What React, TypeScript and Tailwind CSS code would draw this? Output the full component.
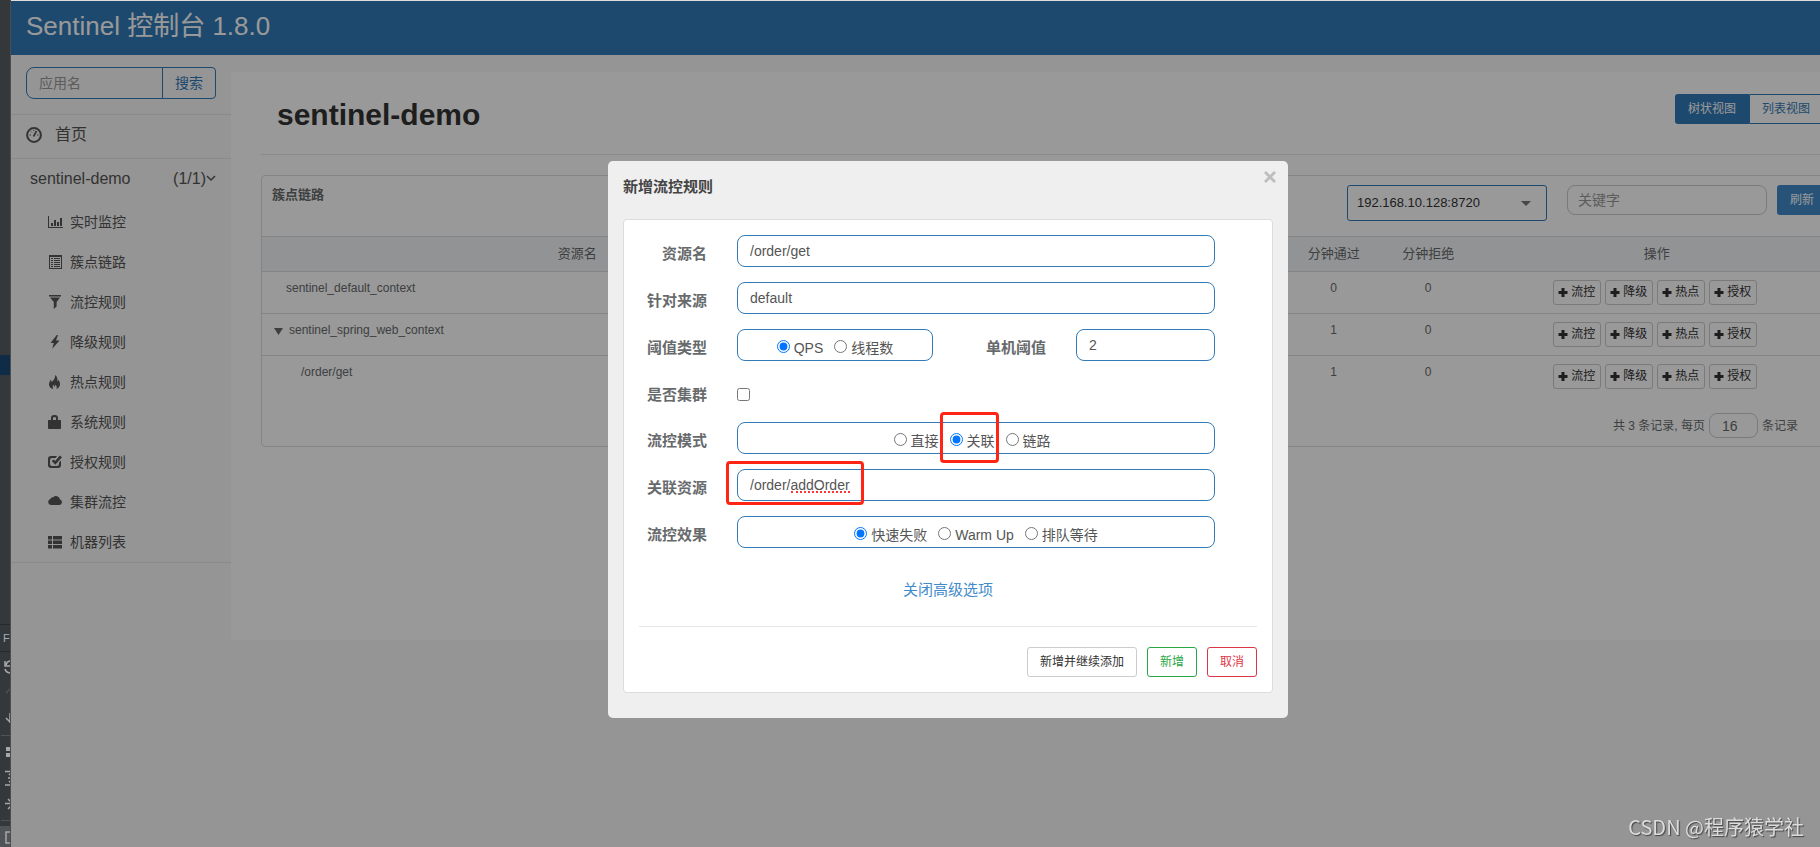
import React, { useState } from "react";

const actions = ["流控", "降级", "热点", "授权"];

const resources = [
  { name: "sentinel_default_context", indent: "pl-6", expanded: false, pass: 0, block: 0 },
  { name: "sentinel_spring_web_context", indent: "pl-3", expanded: true, pass: 1, block: 0 },
  { name: "/order/get", indent: "pl-[39px]", expanded: false, pass: 1, block: 0 },
];

const menuItems = [
  {
    label: "实时监控",
    icon: (
      <path d="M0 1h1v11h14v1H0zM3 8h2v3H3zM6 5h2v6H6zM9 7h2v4H9zM12 3h2v8h-2z" />
    ),
  },
  {
    label: "簇点链路",
    icon: (
      <path
        fillRule="evenodd"
        d="M1 0h13v14H1zM2 2v11h11V2zM3 3h2v1H3zM6 3h6v1H6zM3 5h2v1H3zM6 5h6v1H6zM3 7h2v1H3zM6 7h6v1H6zM3 9h2v1H3zM6 9h6v1H6zM3 11h2v1H3zM6 11h6v1H6z"
      />
    ),
  },
  {
    label: "流控规则",
    icon: <path d="M1 0h12v1.5H1zM2 2.5h10L8.6 7v4.5L5.8 14V7z" />,
  },
  {
    label: "降级规则",
    icon: <path d="M8.8 0 2.5 8h3.3L4.2 13.8 11.6 5.4H8L10 0z" />,
  },
  {
    label: "热点规则",
    icon: (
      <path d="M7 0c2.2 1.6 3 4 2 6.6.7-.3 1-1.1.9-2 1.6 1.6 2.6 3.6 2 5.7-.5 2-2 3.2-3.6 3.7.9-1.5.5-3-.8-4.6-.1 1.3-.5 2-1.3 2.4-.2-.8-.3-1.5-.9-2.3-.6 1.4-.8 2.8 0 4.5C2.8 13.3 1 11.7 1 9.4c0-2 1-3.3 2-4.8.1 1 .2 1.8.7 2.3C5.900 5.200 7.500 3 7 0z" />
    ),
  },
  {
    label: "系统规则",
    icon: (
      <path
        fillRule="evenodd"
        d="M3 5V3a3 3 0 0 1 3-3h1a3 3 0 0 1 3 3v2h2.500q.5 0 .5.500V13q0 1-1 1H1q-1 0-1-1V5.500Q0 5 .5 5zM5 5h3V3.200Q8 2 6.500 2T5 3.200z"
      />
    ),
  },
  {
    label: "授权规则",
    icon: (
      <path
        fillRule="evenodd"
        d="M3 1h6l-1.500 2H4Q2 3 2 5v4q0 2 2 2h5q2 0 2-2V7.500l2-2V10q0 3-3 3H3q-3 0-3-3V4q0-3 3-3zM11.800.5 14 2.300 7.300 9.800 3.800 6l1.800-1.600L7.200 6z"
      />
    ),
  },
  {
    label: "集群流控",
    icon: (
      <path d="M3 10a3 3 0 0 1-.6-5.900A2.300 2.300 0 0 1 5 2.400 4 4 0 0 1 12 4.400 2.900 2.900 0 0 1 11.500 10z" />
    ),
  },
  {
    label: "机器列表",
    icon: (
      <path d="M0 1h4v3.500H0zM5 1h9v3.500H5zM0 5.500h4V9H0zM5 5.500h9V9H5zM0 10h4v3.500H0zM5 10h9v3.500H5z" />
    ),
  },
];

const boxStyle = "h-8 rounded-lg border border-[#337ab7] bg-white text-sm text-[#555]";
const labelStyle = "mr-[30px] w-[68px] shrink-0 pt-[3px] text-right text-[15px] font-bold text-[#676a6c]";

type RadioGroupProps = {
  name: string;
  options: string[];
  value: string;
  onChange: (value: string) => void;
  marked?: string;
};

function RadioGroup({ name, options, value, onChange, marked }: RadioGroupProps) {
  return (
    <div role="radiogroup" className="flex h-full items-center justify-center gap-[11px] pt-0.5">
      {options.map((option) => (
        <label key={option} className="relative flex items-center gap-1">
          <input
            type="radio"
            name={name}
            checked={value === option}
            onChange={() => onChange(option)}
            className="size-[13px]"
          />
          <span className="pt-[3px] leading-5">{option}</span>
          {marked === option && (
            <span className="pointer-events-none absolute -top-4 -right-1 -bottom-3 -left-[10px] rounded-sm border-3 border-[#ff2414]" />
          )}
        </label>
      ))}
    </div>
  );
}

// Narrow slice of the editor tool window on the left edge
function EditorStrip() {
  return (
    <div className="flex w-[11px] shrink-0 flex-col overflow-hidden border-r border-[#4b4d4f] bg-[#35383a]">
      <div className="h-[355px] shrink-0" />
      <div className="h-5 shrink-0 bg-[#0f2c47]" />
      <div className="h-[249px] shrink-0" />
      <div className="h-7 shrink-0 border-y border-[#262829] pl-[3px] text-[11px] leading-[26px] text-[#9fb0bd]">Fi</div>
      <svg className="h-[195px] w-[11px] shrink-0" viewBox="0 0 11 195" fill="none" stroke="#a5a7a8" strokeWidth="1.500">
        <path d="M5 9v5h5M6 13a5 5 0 0 1 5-4M5 17q1 4 6 4" />
        <path d="M6 41l5-5" stroke="#4d5052" />
        <path d="M6 66l5 5M10 61v10" />
        <path d="M1 83.500h10M1 168.500h10" stroke="#505355" strokeWidth="1" />
        <path d="M6 95h4v4H6zM6 101h4v4H6z" fill="#a5a7a8" stroke="none" />
        <path d="M5 119.500h6M5 133h6M8 126h3M9 123l2-2M9 129l2 2" />
        <path d="M5 151.500h6M8 147l3 3M8 157l3-3" />
        <path d="M0 174h11v21H0z" fill="#505456" stroke="none" />
        <path d="M11 180H6v11h5" />
      </svg>
    </div>
  );
}

function Sidebar() {
  return (
    <aside className="w-[220px] shrink-0 text-[#555]">
      <form className="flex border-b border-[#e7e7e7] px-[15px] pt-3 pb-[15px]">
        <input
          aria-label="应用名"
          placeholder="应用名"
          className="h-8 w-[137px] rounded-l-lg border border-[#337ab7] px-3 text-sm placeholder:text-[#999]"
        />
        <button type="button" className="-ml-px h-8 flex-1 rounded-r border border-[#337ab7] text-sm text-[#337ab7]">
          搜索
        </button>
      </form>
      <a href="#home" className="flex h-11 items-center gap-[13px] border-b border-[#e7e7e7] px-[15px] pb-[3px] text-base">
        <svg className="size-4" viewBox="0 0 16 16" fill="none" stroke="currentColor">
          <circle cx="8" cy="8" r="6.900" strokeWidth="2" />
          <path d="M7.500 9.500 10.500 4" strokeWidth="1.600" />
          <path d="M3.500 8h1.500M11 8h1.500M5 4.500l.8.800M7.800 3v1" />
        </svg>
        首页
      </a>
      <a href="#app" className="flex h-[43px] items-center pr-[15px] pb-[3px] pl-[19px] text-base">
        <span className="flex-1">sentinel-demo</span>
        (1/1)
        <svg className="size-[10px]" viewBox="0 0 10 10" fill="none" stroke="currentColor" strokeWidth="1.500">
          <path d="M1 2l4 4 4-4" />
        </svg>
      </a>
      <nav className="border-b border-[#e7e7e7]">
        {menuItems.map((item) => (
          <a key={item.label} href="#menu" className="flex h-10 items-center gap-2 pl-[37px] text-sm">
            <svg className="size-[14px] overflow-visible" viewBox="0 0 14 14" fill="currentColor">
              {item.icon}
            </svg>
            {item.label}
          </a>
        ))}
      </nav>
    </aside>
  );
}

function ResourceTable() {
  return (
    <table className="w-full table-fixed border-t border-[#ddd] text-xs leading-[17px]">
      <colgroup>
        <col className="w-[40%]" />
        <col className="w-[25%]" />
        <col className="w-[6%]" />
        <col className="w-[6%]" />
        <col />
      </colgroup>
      <thead>
        <tr className="h-[35px] border-b border-[#ddd] bg-[#f3f5f7] text-[13px]">
          <th className="pb-0.5 font-normal">资源名</th>
          <td />
          <th className="pb-0.5 font-normal">分钟通过</th>
          <th className="pb-0.5 font-normal">分钟拒绝</th>
          <th className="pb-0.5 font-normal">操作</th>
        </tr>
      </thead>
      <tbody>
        {resources.map((row) => (
          <tr key={row.name} className="border-b border-[#ddd] align-top last:border-0">
            <td className={`pt-2 ${row.indent}`}>
              <span className="flex items-center gap-[6px]">
                {row.expanded && (
                  <svg className="size-[9px]" viewBox="0 0 9 9" fill="currentColor">
                    <path d="M0 2h9L4.500 9z" />
                  </svg>
                )}
                {row.name}
              </span>
            </td>
            <td />
            <td className="pt-2 text-center">{row.pass}</td>
            <td className="pt-2 text-center">{row.block}</td>
            <td className="py-2 pr-1">
              <div className="flex justify-center gap-1">
                {actions.map((action) => (
                  <button
                    key={action}
                    type="button"
                    className="flex h-[25px] w-12 items-center justify-center gap-[3px] rounded-[3px] border border-[#ccc] text-[#333]"
                  >
                    <svg className="size-[10px]" viewBox="0 0 10 10" fill="currentColor">
                      <path d="M3.500 0h3v3h3v3h-3v3h-3v-3h-3v-3h3z" />
                    </svg>
                    {action}
                  </button>
                ))}
              </div>
            </td>
          </tr>
        ))}
      </tbody>
    </table>
  );
}

function Dashboard() {
  return (
    <main className="mt-[17px] h-[568px] min-w-0 flex-1 bg-white pr-[46px] pl-[30px] text-[#676a6c]">
      <div className="flex items-start justify-between border-b border-[#e7e7e7] pt-[22px] pr-4 pb-[18px] pl-4">
        <h1 className="text-[30px] leading-[42px] font-bold text-[#333]">sentinel-demo</h1>
        <div className="flex text-xs">
          <button type="button" className="h-[30px] w-[74px] rounded-l-[3px] bg-[#337ab7] text-white">
            树状视图
          </button>
          <button type="button" className="h-[30px] w-[74px] rounded-r-[3px] border border-[#337ab7] text-[#337ab7]">
            列表视图
          </button>
        </div>
      </div>

      <section className="mt-5 rounded border border-[#ddd]">
        <div className="flex h-[60px] items-start pt-[9px] pr-[11px] pl-[10px]">
          <h2 className="flex-1 text-[13px] leading-5 font-bold">簇点链路</h2>
          <div className="relative">
            <select
              aria-label="机器"
              className="h-9 w-[200px] appearance-none rounded-[3px] border border-[#337ab7] px-[9px] text-[13px] text-[#333]"
            >
              <option>192.168.10.128:8720</option>
            </select>
            <svg className="pointer-events-none absolute top-4 right-4 h-[5px] w-[10px]" viewBox="0 0 10 5" fill="#777">
              <path d="M0 0h10L5 5z" />
            </svg>
          </div>
          <input
            aria-label="关键字"
            placeholder="关键字"
            className="ml-5 h-[30px] w-[200px] rounded-lg border border-[#ccc] px-[10px] text-sm placeholder:text-[#999]"
          />
          <button type="button" className="ml-[10px] h-[30px] w-[50px] rounded-[3px] bg-[#428bca] text-xs text-white">
            刷新
          </button>
        </div>
        <ResourceTable />
        <div className="flex items-center justify-end gap-1 pt-4 pr-10 pb-2 text-xs">
          <label htmlFor="page-size">共 3 条记录, 每页</label>
          <input
            id="page-size"
            defaultValue="16"
            className="h-[25px] w-[49px] rounded-lg border border-[#ccc] px-3 text-sm"
          />
          <span>条记录</span>
        </div>
      </section>
    </main>
  );
}

function FlowRuleDialog() {
  const [grade, setGrade] = useState("QPS");
  const [strategy, setStrategy] = useState("关联");
  const [behavior, setBehavior] = useState("快速失败");

  return (
    <form role="dialog" aria-label="新增流控规则" className="w-[680px] rounded-[5px] bg-[#efefef] px-[15px] pb-[25px]">
      <div className="flex h-[58px] justify-between">
        <h2 className="pt-4 text-[15px] leading-5 font-bold text-[#444]">新增流控规则</h2>
        <button type="button" aria-label="关闭" className="-mr-[3px] flex h-8 items-center text-[#bebebe]">
          <svg className="size-3" viewBox="0 0 12 12" fill="none" stroke="currentColor" strokeWidth="2.800">
            <path d="M1 1l10 10M11 1L1 11" />
          </svg>
        </button>
      </div>

      <div className="rounded border border-[#ddd] bg-white p-[15px]">
        <div className="flex flex-col gap-[15px] pr-[42px] leading-8">
          <div className="flex h-8">
            <label htmlFor="resource" className={labelStyle}>资源名</label>
            <input id="resource" defaultValue="/order/get" className={`${boxStyle} flex-1 px-3`} />
          </div>
          <div className="flex h-8">
            <label htmlFor="limit-app" className={labelStyle}>针对来源</label>
            <input id="limit-app" defaultValue="default" className={`${boxStyle} flex-1 px-3`} />
          </div>
          <div className="flex h-8">
            <span className={labelStyle}>阈值类型</span>
            <div className={`${boxStyle} w-[196px]`}>
              <RadioGroup name="grade" options={["QPS", "线程数"]} value={grade} onChange={setGrade} />
            </div>
            <label htmlFor="count" className="mr-[30px] flex-1 pt-[3px] text-right text-[15px] font-bold text-[#676a6c]">
              单机阈值
            </label>
            <input id="count" defaultValue="2" className={`${boxStyle} w-[139px] px-3`} />
          </div>
          <div className="flex h-[31px]">
            <label htmlFor="cluster" className={labelStyle}>是否集群</label>
            <input id="cluster" type="checkbox" className="mt-3 size-[13px]" />
          </div>
          <div className="flex h-8">
            <span className={labelStyle}>流控模式</span>
            <div className={`${boxStyle} flex-1 pr-2`}>
              <RadioGroup
                name="strategy"
                options={["直接", "关联", "链路"]}
                value={strategy}
                onChange={setStrategy}
                marked="关联"
              />
            </div>
          </div>
          <div className="flex h-8">
            <label htmlFor="ref-resource" className={labelStyle}>关联资源</label>
            <div className="relative flex flex-1">
              <input
                id="ref-resource"
                spellCheck={false}
                defaultValue="/order/addOrder"
                className={`${boxStyle} flex-1 px-3`}
              />
              <span className="pointer-events-none absolute bottom-2 left-[54px] w-[59px] border-b-2 border-dotted border-[#f33]" />
              <span className="pointer-events-none absolute -top-2 -left-[11px] h-11 w-[138px] rounded-sm border-3 border-[#ff2414]" />
            </div>
          </div>
          <div className="flex h-8">
            <span className={labelStyle}>流控效果</span>
            <div className={`${boxStyle} flex-1`}>
              <RadioGroup
                name="behavior"
                options={["快速失败", "Warm Up", "排队等待"]}
                value={behavior}
                onChange={setBehavior}
              />
            </div>
          </div>
        </div>

        <div className="flex justify-center border-b border-[#e7e7e7] pt-8 pb-[26px]">
          <a href="#advanced" className="text-[15px] leading-5 text-[#428bca]">关闭高级选项</a>
        </div>

        <div className="flex justify-end gap-[10px] pt-5 text-xs">
          <button type="button" className="h-[30px] w-[110px] rounded-[3px] border border-[#ccc] text-[#333]">
            新增并继续添加
          </button>
          <button type="button" className="h-[30px] w-[50px] rounded-[3px] border border-[#28a745] text-[#28a745]">
            新增
          </button>
          <button type="button" className="h-[30px] w-[50px] rounded-[3px] border border-[#dc3545] text-[#dc3545]">
            取消
          </button>
        </div>
      </div>
    </form>
  );
}

export default function App() {
  return (
    <div className="flex h-screen overflow-hidden bg-[#f8f8f8] font-['Liberation_Sans','Noto_Sans_CJK_SC',sans-serif]">
      <EditorStrip />

      {/* The console runs past the right edge of the window */}
      <div className="relative -mr-[65px] flex-1 border-t border-[#ddd]">
        <header className="h-[54px] bg-[#337ab7] px-[15px] text-[26px] leading-[50px] text-white">
          Sentinel 控制台 1.8.0
        </header>
        <div className="flex">
          <Sidebar />
          <Dashboard />
        </div>

        {/* Modal */}
        <div className="absolute inset-0 flex items-start justify-center bg-black/40 pt-40">
          <FlowRuleDialog />
        </div>
      </div>

      <div className="fixed right-4 bottom-[5px] text-xl leading-[30px] text-[#dcdcdc] [text-shadow:1px_1px_1px_#444] font-['Noto_Sans_CJK_SC',sans-serif]">
        CSDN @程序猿学社
      </div>
    </div>
  );
}
